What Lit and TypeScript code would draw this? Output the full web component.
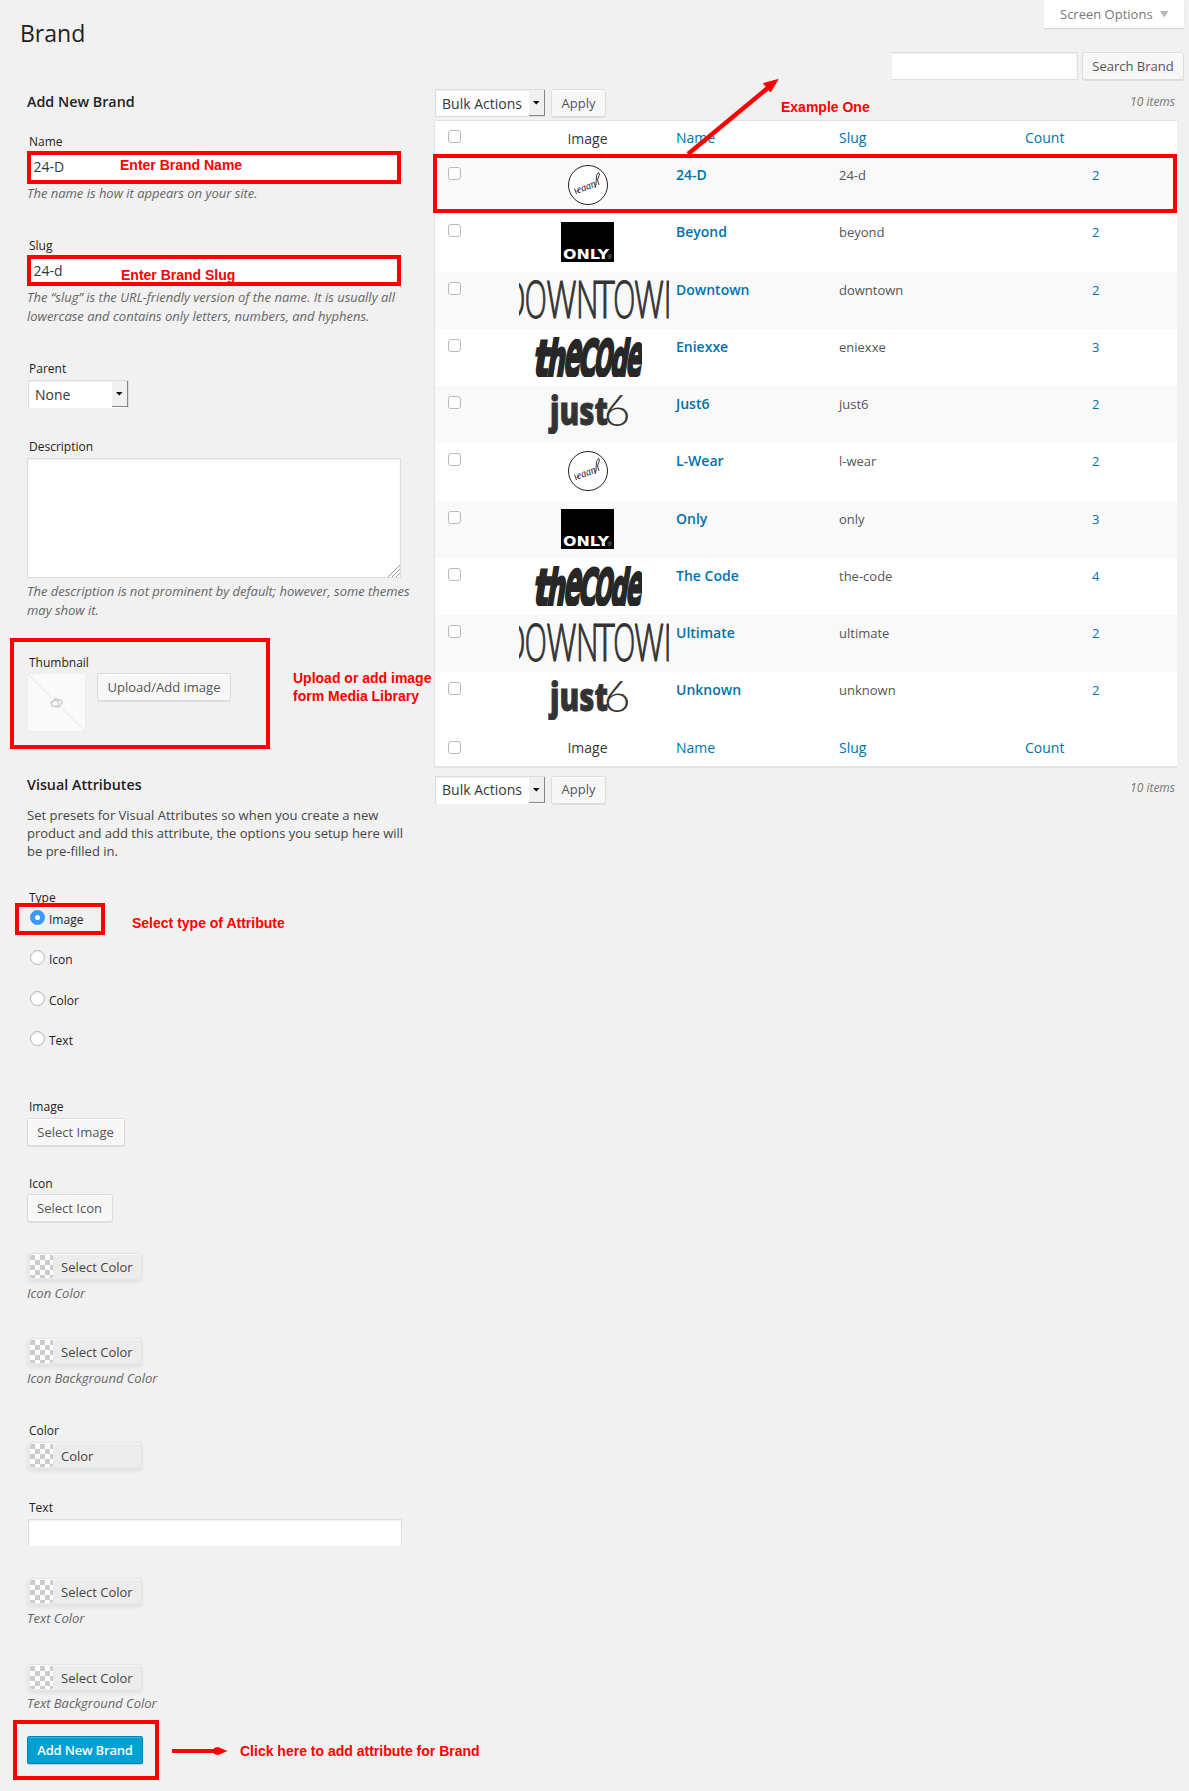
import { LitElement, html, css, svg } from "lit";
import { customElement } from "lit/decorators.js";

type Logo = "round" | "only" | "downtown" | "code" | "just";

interface Brand {
  name: string;
  slug: string;
  count: number;
  logo: Logo;
}

const BRANDS: Brand[] = [
  { name: "24-D", slug: "24-d", count: 2, logo: "round" },
  { name: "Beyond", slug: "beyond", count: 2, logo: "only" },
  { name: "Downtown", slug: "downtown", count: 2, logo: "downtown" },
  { name: "Eniexxe", slug: "eniexxe", count: 3, logo: "code" },
  { name: "Just6", slug: "just6", count: 2, logo: "just" },
  { name: "L-Wear", slug: "l-wear", count: 2, logo: "round" },
  { name: "Only", slug: "only", count: 3, logo: "only" },
  { name: "The Code", slug: "the-code", count: 4, logo: "code" },
  { name: "Ultimate", slug: "ultimate", count: 2, logo: "downtown" },
  { name: "Unknown", slug: "unknown", count: 2, logo: "just" },
];

// Letter, left edge and advance width of each glyph in the wide wordmark.
const DOWNTOWN: [string, number, number][] = [
  ["D", -15.5, 22],
  ["O", 5.8, 22],
  ["W", 27.5, 30],
  ["N", 57, 22.5],
  ["T", 76, 19.8],
  ["O", 94.3, 22],
  ["W", 115.3, 29.5],
  ["N", 144.8, 22.5],
];

// Letter, left edge, advance width and font size in the slanted wordmark.
const CODE: [string, number, number, number][] = [
  ["t", 0, 15, 50],
  ["h", 13.5, 18, 50],
  ["e", 30, 17, 64],
  ["C", 45, 17.5, 50],
  ["O", 60.5, 18, 50],
  ["d", 77, 17, 50],
  ["e", 92.5, 16, 58],
];

const logos = {
  round: html`<svg width="40" height="40" viewBox="0 0 40 40">
    <circle cx="20" cy="20" r="19.5" fill="#fff" stroke="#222" stroke-width="1" />
    <text x="10" y="28.5" transform="rotate(-21 10 28.5)" font-family="Liberation Serif, serif" font-style="italic" font-size="11" textLength="20" lengthAdjust="spacingAndGlyphs" fill="#222">eaan</text>
    <path d="M6.500 23.500l2 5.500M8.500 27l3-3M27 23l1 -4M28 19.500l.5-9 2-3 1 1.500-2 6 1.500 5" fill="none" stroke="#222" stroke-width=".9" />
  </svg>`,
  only: html`<svg width="54" height="40" viewBox="0 0 54 40">
    <rect width="53" height="40" fill="#000" />
    <text x="2" y="36.6" font-family="DejaVu Sans, sans-serif" font-weight="700" font-size="14.500" textLength="46" lengthAdjust="spacingAndGlyphs" fill="#fff">ONLY</text>
    <text x="46.500" y="37" font-family="Liberation Sans, sans-serif" font-size="6" fill="#aaa">®</text>
  </svg>`,
  downtown: html`<svg class="wide" width="150" height="40" viewBox="0 0 150 40">
    ${DOWNTOWN.map(
      ([c, x, w]) =>
        svg`<text x=${x} y="38.2" font-family="Open Sans, sans-serif" font-weight="300" font-size="51" textLength=${w} lengthAdjust="spacingAndGlyphs" fill="#333" stroke="#333" stroke-width="1.1">${c}</text>`
    )}
  </svg>`,
  code: html`<svg width="108" height="40" viewBox="0 0 108 40">
    <g transform="translate(-1.5 38.6) skewX(-9)">
      ${CODE.map(
        ([c, x, w, s]) =>
          svg`<text x=${x} y="0" font-family="DejaVu Sans, sans-serif" font-weight="700" font-size=${s} textLength=${w} lengthAdjust="spacingAndGlyphs" fill="#272727" stroke="#272727" stroke-width="3" stroke-linejoin="miter">${c}</text>`
      )}
    </g>
  </svg>`,
  just: html`<svg width="80" height="40" viewBox="0 0 80 40">
    <text x="2" y="31" font-family="Open Sans, sans-serif" font-weight="800" font-size="38" textLength="58" lengthAdjust="spacingAndGlyphs" fill="#333" stroke="#333" stroke-width=".8">just</text>
    <text x="55.5" y="31.5" font-family="Lato, sans-serif" font-weight="300" font-size="44" textLength="27" lengthAdjust="spacingAndGlyphs" fill="#333">6</text>
  </svg>`,
};

@customElement("app-root")
export class AppRoot extends LitElement {
  static styles = css`
    :host {
      display: block;
      font-family: "Open Sans", sans-serif;
      color: #444;
      background: #f1f1f1;
    }
    * { box-sizing: border-box; }
    .page {
      position: relative;
      display: flex;
      width: 1189px;
      height: 1791px;
      overflow: hidden;
      background: #f1f1f1;
    }
    h1, h2, p { margin: 0; }
    svg { display: block; flex-shrink: 0; }

    .form {
      width: 434px;
      padding: 18px 0 0 27px;
      display: flex;
      flex-direction: column;
      align-items: flex-start;
    }
    h1 { margin-left: -7px; font-size: 23px; line-height: 30px; font-weight: 400; color: #222; }
    h2 { font-size: 14.3px; line-height: 22px; height: 20px; font-weight: 600; color: #222; }
    .add { margin-top: 43px; }
    .label { font-size: 12px; line-height: 18px; height: 16px; padding-left: 2px; color: #222; }
    .help { font-size: 13px; line-height: 19px; font-style: italic; color: #666; width: 392px; letter-spacing: -0.02px; }
    .l-name { margin-top: 22px; }
    .l-slug { margin-top: 34px; }
    .h-slug { margin-top: 2px; letter-spacing: 0; }
    .l-parent { margin-top: 34px; }
    .l-desc { margin-top: 30px; }
    .field {
      width: 374px;
      border: 4px solid red;
      background: #fff;
      color: #32373c;
      font: 14px/22px "Open Sans", sans-serif;
      padding: 0 2.5px;
      border-radius: 0;
      outline: none;
    }
    .f-name { height: 33px; margin-top: 2px; padding-bottom: 3px; }
    .f-slug { height: 31px; margin-top: 2px; }
    .select {
      display: flex;
      justify-content: space-between;
      height: 28px;
      background: #fff;
      border: 1px solid #ddd;
      font-size: 14px;
      line-height: 27px;
      color: #32373c;
      padding-left: 6px;
      box-shadow: inset 0 1px 2px rgba(0, 0, 0, 0.07);
    }
    .drop {
      width: 16px;
      height: 26px;
      background: #f0f0f0;
      border-right: 1.5px solid #858585;
      border-bottom: 1.5px solid #858585;
      padding: 11px 0 0 4px;
    }
    .parent { width: 101px; margin: 4px 0 0 1px; line-height: 28px; border-bottom: 0; }
    textarea {
      display: block;
      width: 374px;
      height: 120px;
      margin-top: 4px;
      border: 1px solid #ddd;
      background: #fff;
      resize: none;
      box-shadow: inset 0 1px 2px rgba(0, 0, 0, 0.07);
    }
    .area { position: relative; }
    .grip { position: absolute; right: 1px; bottom: 1px; }
    .h-desc { margin-top: 4px; }
    .thumb {
      width: 260px;
      height: 111px;
      margin: 18px 0 0 -17px;
      border: 4px solid red;
      padding: 12px 0 0 13px;
    }
    .thumb-row { display: flex; gap: 11px; margin-top: 3px; }
    .btn {
      height: 28px;
      border: 1px solid #ddd;
      border-radius: 3px;
      background: #f7f7f7;
      box-shadow: inset 0 1px 0 #fff, 0 1px 0 rgba(0, 0, 0, 0.08);
      font: 13px/25px "Open Sans", sans-serif;
      color: #555;
      padding: 0;
      text-align: center;
      white-space: nowrap;
    }
    .b-upload { width: 134px; }
    .visual { margin-top: 25px; }
    .intro { margin-top: 12px; font-size: 13px; line-height: 18px; width: 392px; }
    .l-type { margin-top: 29px; height: 14px; }
    .pick {
      width: 90px;
      height: 32px;
      margin-left: -12px;
      border: 4px solid red;
      padding: 4px 0 0 11px;
      background: #f1f1f1;
      z-index: 1;
    }
    .radio { display: flex; align-items: center; height: 16px; font-size: 12px; line-height: 16px; color: #222; gap: 4px; }
    .radio-text { padding-top: 1px; }
    .dot {
      width: 15px;
      height: 15px;
      margin-top: -3px;
      border-radius: 50%;
      border: 1px solid #b4b9be;
      background: #fff;
      box-shadow: inset 0 1px 2px rgba(0, 0, 0, 0.1);
    }
    .on { border: 5px solid #3b99fc; background: #fff; box-shadow: none; }
    .r-icon { margin: 16px 0 0 3px; }
    .r-color { margin: 25px 0 0 3px; }
    .r-text { margin: 24px 0 0 3px; }
    .l-image { margin-top: 50px; }
    .b-image { width: 98px; margin-top: 4px; padding-right: 1px; }
    .l-icon { margin-top: 29px; }
    .b-icon { width: 86px; margin-top: 3px; padding-right: 1px; }
    .color {
      display: flex;
      width: 114px;
      height: 27px;
      margin-left: 1px;
      border: 1px solid #e4e4e4;
      border-radius: 3px;
      background: #ececec;
      box-shadow: inset 0 1px 0 #f8f8f8, 0 2px 4px rgba(0, 0, 0, 0.08);
      padding: 1px;
      font-size: 13px;
      line-height: 25px;
      color: #444;
      gap: 8px;
    }
    .swatch {
      width: 23px;
      height: 23px;
      border-radius: 2px;
      background: repeating-conic-gradient(#ccc 0 25%, #fff 0 50%) 5px 0 / 10px 10px;
    }
    .c1 { margin-top: 31px; }
    .hc1 { margin-top: 4px; }
    .c2 { margin-top: 35px; }
    .hc2 { margin-top: 4px; }
    .l-color { margin-top: 34px; }
    .c3 { margin-top: 4px; }
    .l-text { margin-top: 30px; }
    .text {
      width: 374px;
      height: 27px;
      margin: 4px 0 0 1px;
      border: 1px solid #ddd;
      border-bottom: 0;
      background: #fff;
      box-shadow: inset 0 1px 2px rgba(0, 0, 0, 0.07);
      outline: none;
      border-radius: 0;
    }
    .c4 { margin-top: 32px; }
    .hc4 { margin-top: 4px; }
    .c5 { margin-top: 36px; }
    .hc5 { margin-top: 3px; }
    .submit {
      width: 146px;
      height: 60px;
      margin: 7px 0 0 -14px;
      border: 4px solid red;
      padding: 12px 10px;
    }
    .primary {
      width: 116px;
      height: 28px;
      border: 1px solid #0085ba;
      border-radius: 2px;
      background: #00a0d2;
      box-shadow: inset 0 1px 0 rgba(120, 200, 230, 0.5), 0 1px 0 rgba(0, 0, 0, 0.15);
      color: #fff;
      font: 600 13px/25px "Open Sans", sans-serif;
      letter-spacing: -0.18px;
      padding: 0;
    }

    .list { width: 755px; display: flex; flex-direction: column; }
    .options {
      align-self: flex-end;
      display: flex;
      align-items: center;
      gap: 7px;
      width: 140px;
      height: 28px;
      margin-right: 5px;
      padding: 0 0 0 16px;
      background: #fff;
      box-shadow: 0 1px 1px rgba(0, 0, 0, 0.1);
      font-size: 13px;
      color: #777;
    }
    .search { display: flex; align-self: flex-end; gap: 4px; margin: 24px 5px 0 0; }
    .query {
      width: 186px;
      height: 28px;
      border: 1px solid #ddd;
      border-left: 0;
      background: #fff;
      box-shadow: inset 0 1px 2px rgba(0, 0, 0, 0.07);
      border-radius: 0;
    }
    .b-search { width: 102px; line-height: 26px; }
    .bar { display: flex; height: 28px; margin: 9px 14px 0 1px; }
    .bulk { width: 110px; border-right-width: 0; }
    .b-apply { width: 55px; margin-left: 6px; }
    .items { margin-left: auto; font-size: 12px; line-height: 16px; font-style: italic; color: #777; padding-top: 5px; }
    .bottom .items { padding-top: 4px; }
    .bottom .select { border-bottom: 0; line-height: 26px; }
    .bottom { margin-top: 8.5px; }
    .table {
      width: 743px;
      height: 647px;
      margin-top: 3px;
      border: 1px solid #e3e3e3;
      border-right: 0;
      background: #fff;
      box-shadow: 0 1px 1px rgba(0, 0, 0, 0.04);
      display: grid;
      grid-template-rows: 36px repeat(10, 57.25px) 36.5px;
    }
    .row { display: grid; grid-template-columns: 83px 158px 163px 186px 1fr; padding-top: 10.2px; }
    .row.odd { background: #f9f9f9; }
    .cell { font-size: 13px; line-height: 20px; margin-top: -2.2px; color: #555; }
    .row.head { padding-top: 9px; }
    .row.head .cell { font-size: 14px; color: #0073aa; margin-top: -2px; }
    .row.head .cell.plain { color: #32373c; text-align: center; margin-top: -1px; width: 139px; }
    .row .name { font-weight: 600; font-size: 14px; color: #0073aa; }
    .row .count { color: #0073aa; padding-left: 67px; }
    .row.foot { padding-top: 11.5px; }
    .row.foot .cell, .row.foot .cell.plain { margin-top: -3.5px; }
    .check {
      width: 13px;
      height: 13px;
      margin-left: 13px;
      border: 1px solid #b9b9b9;
      border-radius: 3px;
      background: #fff;
    }
    .image { margin: -2.2px 0 0 -5px; width: 150px; height: 40px; display: flex; justify-content: center; }
    .wide { transform: translateX(6px); }

    .note {
      position: absolute;
      font: 700 14px/18px "Liberation Sans", sans-serif;
      color: red;
      white-space: nowrap;
    }
    .n-name { left: 120px; top: 156px; }
    .n-slug { left: 121px; top: 266px; }
    .n-upload { left: 293px; top: 669px; }
    .n-type { left: 132px; top: 914px; }
    .n-submit { left: 240px; top: 1742px; }
    .n-example { left: 781px; top: 98px; }
    .mark { position: absolute; left: 433px; top: 154px; width: 744px; height: 59px; border: 4px solid red; }
    .arrow { position: absolute; left: 679px; top: 70px; }
    .arrow2 { position: absolute; left: 172px; top: 1745px; }
  `;

  private dropdown(text: string, cls: string) {
    return html`<div class="select ${cls}">
      <span>${text}</span>
      <span class="drop"><svg width="7" height="4"><path d="M0 0h6.6L3.3 3.6z" fill="#000" /></svg></span>
    </div>`;
  }

  private color(text: string, cls: string) {
    return html`<div class="color ${cls}"><span class="swatch"></span><span>${text}</span></div>`;
  }

  private bar(cls: string) {
    return html`<div class="bar ${cls}">
      ${this.dropdown("Bulk Actions", "bulk")}
      <button class="btn b-apply">Apply</button>
      <span class="items">10 items</span>
    </div>`;
  }

  private head(cls: string) {
    return html`<div class="row head ${cls}">
      <span class="check"></span>
      <span class="cell plain">Image</span>
      <span class="cell">Name</span>
      <span class="cell">Slug</span>
      <span class="cell">Count</span>
    </div>`;
  }

  private radio(text: string, cls: string, on = false) {
    return html`<div class="radio ${cls}"><span class="dot ${on ? "on" : ""}"></span><span class="radio-text">${text}</span></div>`;
  }

  render() {
    return html`<div class="page">
      <section class="form">
        <h1>Brand</h1>
        <h2 class="add">Add New Brand</h2>
        <div class="label l-name">Name</div>
        <input class="field f-name" .value=${"24-D"} />
        <p class="help">The name is how it appears on your site.</p>
        <div class="label l-slug">Slug</div>
        <input class="field f-slug" .value=${"24-d"} />
        <p class="help h-slug">The “slug” is the URL-friendly version of the name. It is usually all<br />lowercase and contains only letters, numbers, and hyphens.</p>
        <div class="label l-parent">Parent</div>
        ${this.dropdown("None", "parent")}
        <div class="label l-desc">Description</div>
        <div class="area">
          <textarea></textarea>
          <svg class="grip" width="12" height="12"><path d="M0 12L12 0M4 12l8-8M8 12l4-4" stroke="#999" fill="none" /></svg>
        </div>
        <p class="help h-desc">The description is not prominent by default; however, some themes<br />may show it.</p>
        <div class="thumb">
          <div class="label">Thumbnail</div>
          <div class="thumb-row">
            <svg width="59" height="59" viewBox="0 0 59 59">
              <rect x=".5" y=".5" width="58" height="58" fill="#fafafa" stroke="#eee" />
              <path d="M1 1l23 23M36 36l22 22" stroke="#e6e6e6" />
              <g fill="#fafafa" stroke="#ccc" stroke-width="1.4" stroke-linejoin="round">
                <path d="M28 25.500l7 2.500-2 5.500-4 .5-2-5z" />
                <path d="M24 29l2.500-.5 1-1.500 2 .5 1.500 1 .5 4.500-6 .5z" />
              </g>
            </svg>
            <button class="btn b-upload">Upload/Add image</button>
          </div>
        </div>
        <h2 class="visual">Visual Attributes</h2>
        <p class="intro">Set presets for Visual Attributes so when you create a new<br />product and add this attribute, the options you setup here will<br />be pre-filled in.</p>
        <div class="label l-type">Type</div>
        <div class="pick">${this.radio("Image", "", true)}</div>
        ${this.radio("Icon", "r-icon")} ${this.radio("Color", "r-color")} ${this.radio("Text", "r-text")}
        <div class="label l-image">Image</div>
        <button class="btn b-image">Select Image</button>
        <div class="label l-icon">Icon</div>
        <button class="btn b-icon">Select Icon</button>
        ${this.color("Select Color", "c1")}
        <p class="help hc1">Icon Color</p>
        ${this.color("Select Color", "c2")}
        <p class="help hc2">Icon Background Color</p>
        <div class="label l-color">Color</div>
        ${this.color("Color", "c3")}
        <div class="label l-text">Text</div>
        <input class="text" />
        ${this.color("Select Color", "c4")}
        <p class="help hc4">Text Color</p>
        ${this.color("Select Color", "c5")}
        <p class="help hc5">Text Background Color</p>
        <div class="submit"><button class="primary">Add New Brand</button></div>
      </section>

      <section class="list">
        <div class="options">Screen Options <svg width="9" height="7"><path d="M0 0h8.500L4.250 6.500z" fill="#b4b9be" /></svg></div>
        <div class="search"><input class="query" /><button class="btn b-search">Search Brand</button></div>
        ${this.bar("")}
        <div class="table">
          ${this.head("")}
          ${BRANDS.map(
            (b, i) => html`<div class="row ${i % 2 ? "" : "odd"}">
              <span class="check"></span>
              <span class="image">${logos[b.logo]}</span>
              <span class="cell name">${b.name}</span>
              <span class="cell">${b.slug}</span>
              <span class="cell count">${b.count}</span>
            </div>`
          )}
          ${this.head("foot")}
        </div>
        ${this.bar("bottom")}
      </section>

      <div class="mark"></div>
      <svg class="arrow" width="106" height="90"><path d="M9 84L90 17" stroke="red" stroke-width="4.500" /><path d="M99 9.500l-7.500 12.500-7-8.500z" fill="red" stroke="red" /></svg>
      <svg class="arrow2" width="58" height="12"><path d="M0 6h44" stroke="red" stroke-width="4" /><path d="M42 3l4-1 9.500 4-9.500 4-4-1z" fill="red" /></svg>
      <div class="note n-name">Enter Brand Name</div>
      <div class="note n-slug">Enter Brand Slug</div>
      <div class="note n-upload">Upload or add image<br />form Media Library</div>
      <div class="note n-type">Select type of Attribute</div>
      <div class="note n-submit">Click here to add attribute for Brand</div>
      <div class="note n-example">Example One</div>
    </div>`;
  }
}
